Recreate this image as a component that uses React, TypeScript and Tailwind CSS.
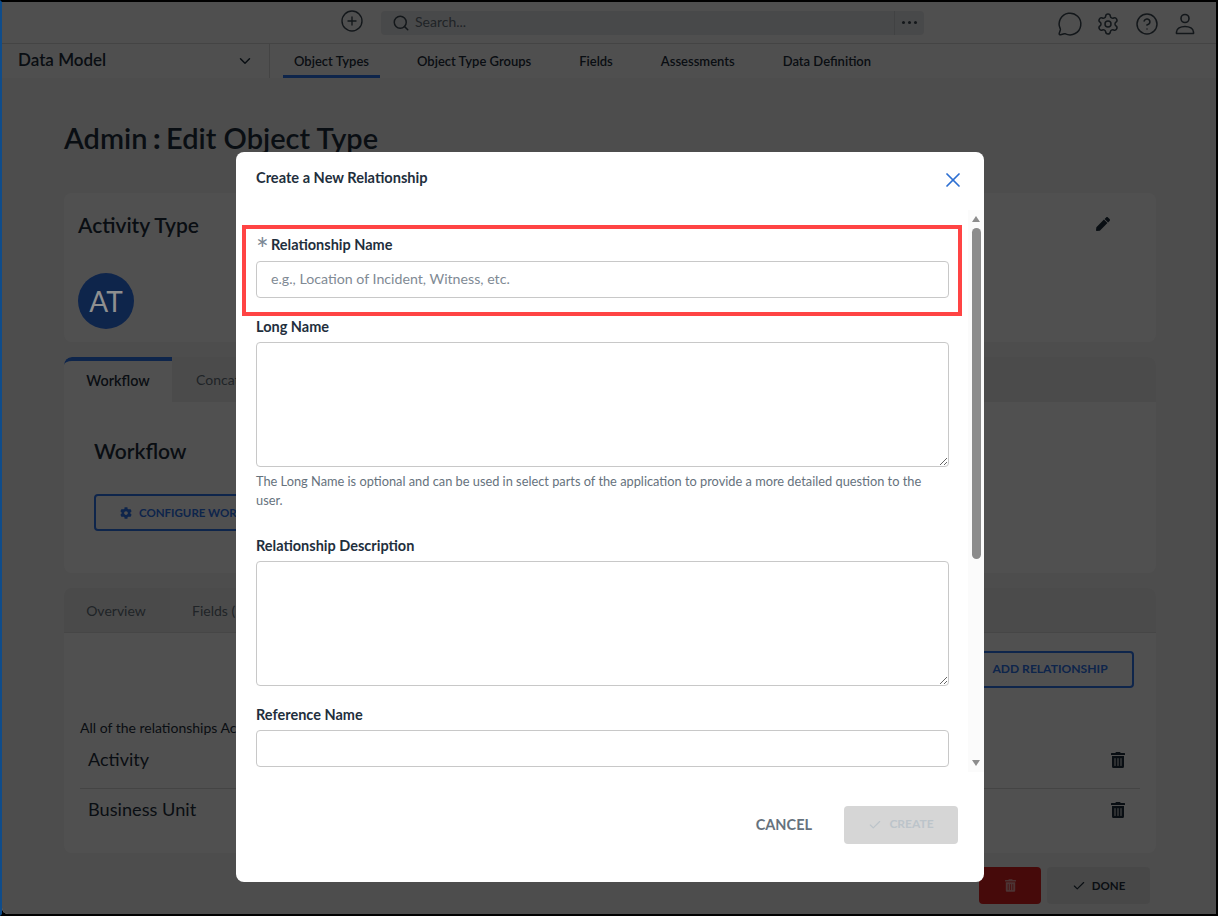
import * as React from "react"
import { Check, ChevronDown, CirclePlus, CircleHelp, MessageCircle, Search, Settings, X } from "lucide-react"
import { FaCog, FaPen, FaTrashAlt } from "react-icons/fa"

const font = "font-['Lato','Noto_Sans',sans-serif]"

const navItems = ["Object Types", "Object Type Groups", "Fields", "Assessments", "Data Definition"]

function Label({ children }: { children: React.ReactNode }) {
  return <label className="block h-[20px] text-[14.5px] leading-[22px] font-bold text-[#1f2f3d]">{children}</label>
}

function TextArea() {
  return <textarea className="block w-full h-[125px] rounded border border-[#c8c8c8] bg-white mt-[6px]" />
}

function Scrollbar() {
  return (
    <div className="w-[16px] shrink-0 bg-[#fbfbfb] flex flex-col items-center pt-[6px] ml-[19px] h-[562px]">
      <div className="w-0 h-0 border-x-[4px] border-x-transparent border-b-[6px] border-b-[#8c8c8c]" />
      <div className="w-[9px] h-[331px] rounded-full bg-[#8c8c8c] mt-[6px] ml-[1px]" />
      <div className="w-0 h-0 border-x-[4px] border-x-transparent border-t-[6px] border-t-[#8c8c8c] mt-[201px]" />
    </div>
  )
}

function Modal() {
  return (
    <div className="absolute z-20 left-[234px] top-[150px] w-[748px] h-[730px] bg-white rounded-lg flex flex-col">
      <div className="flex items-start justify-between pl-[20px] pr-[19px] pt-[16px] h-[58px]">
        <h2 className="text-[14.6px] leading-[20px] font-bold text-[#1f2f3d]">Create a New Relationship</h2>
        <X className="w-[24px] h-[24px] text-[#2d6fd2]" strokeWidth={1.7} />
      </div>
      <div className="flex flex-1 pl-[20px]">
        <div className="w-[693px] shrink-0 pt-[24px]">
          <div className="h-[20px] flex items-center">
            <span className="text-[#7b8794] text-[30px] leading-[20px] w-[15px] pt-[8px]">*</span>
            <Label>Relationship Name</Label>
          </div>
          <input
            placeholder="e.g., Location of Incident, Witness, etc."
            className="block w-full h-[37px] rounded border border-[#c8c8c8] px-[14px] pb-[2px] mt-[7px] text-[14.2px] text-[#1f2f3d] placeholder:text-[#7f8a94]"
          />
          <div className="mt-[18px]">
            <Label>Long Name</Label>
          </div>
          <TextArea />
          <p className="text-[12.8px] leading-[19px] text-[#66727d] mt-[5px] pr-[20px]">
            The Long Name is optional and can be used in select parts of the application to provide a more detailed question to the user.
          </p>
          <div className="mt-[25px]">
            <Label>Relationship Description</Label>
          </div>
          <TextArea />
          <div className="mt-[18px]">
            <Label>Reference Name</Label>
          </div>
          <input className="block w-full h-[37px] rounded border border-[#c8c8c8] mt-[6px]" />
        </div>
        <Scrollbar />
      </div>
      <div className="flex items-center justify-end h-[38px] mb-[38px] pr-[26px] gap-[32px]">
        <span className="text-[14.5px] leading-[20px] font-bold text-[#66727d] pb-[1px]">CANCEL</span>
        <div className="w-[114px] h-[38px] rounded bg-[#d6d6d6] flex items-center justify-center gap-[7px] text-[12px] font-bold text-[#bcc4ca]">
          <Check className="w-[14px] h-[14px]" strokeWidth={2} />
          <span className="pb-[2px]">CREATE</span>
        </div>
      </div>
      <div className="absolute left-[6px] top-[73px] w-[720px] h-[91px] border-[4px] border-[#ff4444]" />
    </div>
  )
}

function Page() {
  return (
    <div className="w-full h-full bg-[#f5f5f5] flex flex-col text-[#1f2f3d]">
      <div className="h-[42px] bg-[#fbfbfb] border-b border-[#d8d8d8] flex items-center shrink-0">
        <CirclePlus className="w-[24px] h-[24px] ml-[338px] -mt-[4px] text-[#3d4a55]" strokeWidth={1.4} />
        <div className="ml-[17px] w-[543px] h-[24px] rounded bg-[#e6e8ea] flex items-center pl-[11px]">
          <Search className="w-[18px] h-[18px] text-[#3d4a55]" strokeWidth={2} />
          <span className="text-[14px] leading-[20px] text-[#66727d] ml-[5px] flex-1 pb-[2px]">Search...</span>
          <div className="w-[30px] h-[24px] border-l border-[#d0d2d4] flex items-center justify-center gap-[3px]">
            <span className="w-[3px] h-[3px] rounded-full bg-[#3d4a55]" />
            <span className="w-[3px] h-[3px] rounded-full bg-[#3d4a55]" />
            <span className="w-[3px] h-[3px] rounded-full bg-[#3d4a55]" />
          </div>
        </div>
        <div className="ml-auto flex items-center gap-[15px] pr-[19px] pt-[2px] text-[#3d4a55]">
          <MessageCircle className="w-[26px] h-[26px] -mr-[2px]" strokeWidth={1.4} />
          <Settings className="w-[24px] h-[24px]" strokeWidth={1.5} />
          <CircleHelp className="w-[24px] h-[24px]" strokeWidth={1.5} />
          <svg viewBox="0 0 24 24" className="w-[24px] h-[24px] -ml-[1px]" fill="none" stroke="currentColor" strokeWidth={1.6}>
            <circle cx="12" cy="6.5" r="4" />
            <path d="M3.5 21.5v-1.5c0-3.5 4-5.5 8.500-5.500s8.500 2 8.500 5.500v1.500z" strokeLinejoin="round" />
          </svg>
        </div>
      </div>
      <div className="h-[34px] bg-[#fbfbfb] flex shrink-0">
        <div className="w-[268px] border-r border-[#d8d8d8] flex items-center justify-between pl-[16px] pr-[15px]">
          <span className="text-[17px] font-semibold pb-[2px]">Data Model</span>
          <ChevronDown className="w-[18px] h-[18px]" />
        </div>
        <div className="flex pl-[13px] gap-[26px]">
          {navItems.map((item, i) => (
            <div
              key={item}
              className={
                i === 0
                  ? "px-[11px] pt-[4px] border-b-[3px] border-[#2f75f0] flex items-center text-[13px] font-semibold"
                  : "px-[11px] pt-[4px] border-b-[3px] border-transparent flex items-center text-[13px] font-semibold"
              }
            >
              {item}
            </div>
          ))}
        </div>
      </div>
      <div className="flex-1 pl-[62px] pr-[60px] pt-[40px] relative">
        <h1 className="text-[29px] leading-[40px] font-semibold">Admin<span className="font-black mx-[5.5px]">:</span>Edit Object Type</h1>
        <div className="mt-[35px] h-[149px] rounded-lg bg-white px-[14px] pt-[19px] relative">
          <div className="text-[21px] leading-[26px] font-semibold">Activity Type</div>
          <div className="mt-[35px] w-[56px] h-[56px] rounded-full bg-[#2f75f0] flex items-center justify-center text-[28px]">
            <span className="relative z-20 text-[#8f8f8f]">AT</span>
          </div>
          <FaPen className="absolute right-[46px] top-[24px] w-[14px] h-[14px]" />
        </div>
        <div className="mt-[15px] h-[216px] rounded-lg bg-white overflow-hidden">
          <div className="h-[45px] bg-[#f0f0f0] flex">
            <div className="w-[108px] bg-white border-t-[4px] border-[#2f75f0] flex items-center justify-center text-[14.4px] font-semibold rounded-tl-lg pb-[2px]">Workflow</div>
            <div className="pl-[24px] flex items-center text-[14px] text-[#66727d]">Concatenation</div>
          </div>
          <div className="pl-[30px] pt-[36px]">
            <div className="text-[21px] leading-[26px] font-semibold">Workflow</div>
            <div className="mt-[30px] w-[200px] h-[37px] rounded border-2 border-[#2f75f0] flex items-center pl-[24px] gap-[7px] text-[11.5px] font-bold text-[#2f75f0]">
              <FaCog className="w-[12px] h-[12px]" />
              CONFIGURE WORKFLOW
            </div>
          </div>
        </div>
        <div className="mt-[15px] h-[265px] rounded-lg bg-white overflow-hidden relative">
          <div className="h-[45px] bg-[#f0f0f0] flex text-[14px] text-[#66727d] border-b border-[#e0e0e0]">
            <div className="w-[106px] flex items-center justify-center bg-[#ececec] pt-[1px] pr-[2px]">Overview</div>
            <div className="pl-[22px] pt-[1px] flex items-center">Fields (5)</div>
          </div>
          <div className="flex justify-end pr-[22px] pt-[18px]">
            <div className="w-[168px] h-[37px] rounded border-2 border-[#2f75f0] flex items-center justify-center text-[12.1px] font-bold text-[#2f75f0]">ADD RELATIONSHIP</div>
          </div>
          <p className="pl-[16px] mt-[30px] text-[14px] leading-[20px]">All of the relationships Activity Type has</p>
          <div className="mx-[16px] h-[51px] pb-[7px] border-b border-[#d8d8d8] flex items-center justify-between px-[8px] text-[18px]">
            Activity
            <FaTrashAlt className="w-[14px] h-[16px] mr-[7px]" />
          </div>
          <div className="mx-[16px] h-[44px] pb-[2px] flex items-center justify-between px-[8px] text-[18.200px]">
            Business Unit
            <FaTrashAlt className="w-[14px] h-[16px] mr-[7px]" />
          </div>
        </div>
        <div className="flex justify-end gap-[6px] mt-[14px] pr-[6px]">
          <div className="w-[62px] h-[37px] rounded bg-[#e02020] flex items-center justify-center text-white/60">
            <FaTrashAlt className="w-[11px] h-[13px]" />
          </div>
          <div className="w-[103px] h-[37px] rounded bg-[#e6e6e6] flex items-center justify-center gap-[6px] text-[11.5px] font-bold">
            <Check className="w-[14px] h-[14px]" />
            DONE
          </div>
        </div>
      </div>
    </div>
  )
}

export default function App() {
  return (
    <div className={`w-[1218px] h-[916px] overflow-hidden bg-black border-2 border-t-black border-b-black border-l-[#0f4c8a] border-r-black ${font}`}>
      <div className="relative w-full h-full rounded-bl-md overflow-hidden">
        <Page />
        <div className="absolute z-10 inset-0 bg-black/[.686]" />
        <Modal />
      </div>
    </div>
  )
}
